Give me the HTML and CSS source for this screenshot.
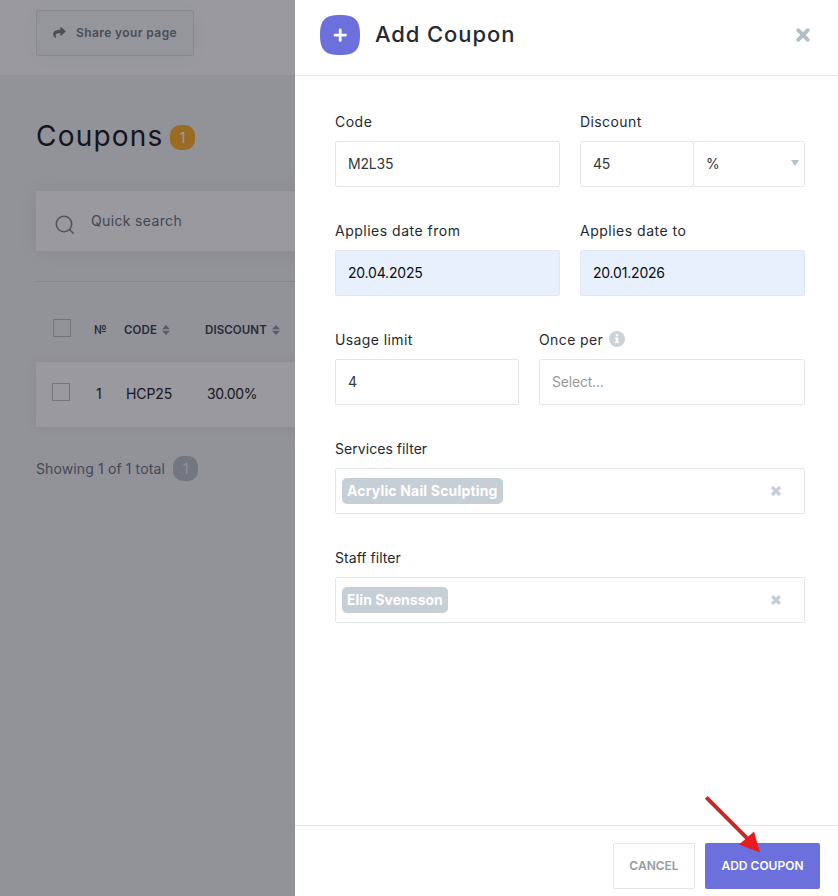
FILE: index.html
```html
<!DOCTYPE html>
<html lang="en">
<head>
    <meta charset="UTF-8">
    <meta name="viewport" content="width=device-width, initial-scale=1.0">
    <title>Coupons</title>
    <link rel="stylesheet" href="styles.css">
</head>
<body>
    <div class="page">
        <div class="topbar">
            <button class="share">
                <svg width="13" height="11" viewBox="0 0 512 448"><path fill="currentColor" d="M503 162 327 10c-15-13-39-2-39 18v80C127 110 0 142 0 293c0 61 39 121 83 153 13 10 33-3 28-19-45-145 22-184 177-186v88c0 20 24 31 39 18l176-152c12-9 12-24 0-33z"/></svg>
                <span>Share your page</span>
            </button>
        </div>
        <div class="content">
            <h1 class="title"><span class="title_text">Coupons</span><span class="badge badge_orange">1</span></h1>
            <div class="search">
                <svg width="20" height="20" viewBox="0 0 20 20" fill="none" stroke="currentColor" stroke-width="1.6"><circle cx="9" cy="9" r="7.7"/><path d="M14.5 14.5 18.6 18.6"/></svg>
                <span class="search_text">Quick search</span>
            </div>
            <div class="table">
                <div class="row row_head">
                    <span class="check"></span>
                    <span class="col_n">№</span>
                    <span class="col_code">CODE <svg class="sort" width="8" height="10" viewBox="0 0 8 10"><path fill="currentColor" d="M4 0 8 4.3H0zM4 10 0 5.7h8z"/></svg></span>
                    <span class="col_disc">DISCOUNT <svg class="sort" width="8" height="10" viewBox="0 0 8 10"><path fill="currentColor" d="M4 0 8 4.3H0zM4 10 0 5.7h8z"/></svg></span>
                </div>
                <div class="row row_item">
                    <span class="check"></span>
                    <span class="col_n">1</span>
                    <span class="col_code">HCP25</span>
                    <span class="col_disc">30.00%</span>
                </div>
            </div>
            <div class="total"><span class="total_text">Showing 1 of 1 total</span><span class="badge badge_grey">1</span></div>
        </div>
    </div>

    <div class="overlay"></div>

    <div class="modal">
        <div class="modal_header">
            <svg class="plus" width="40" height="40" viewBox="0 0 40 40">
                <path fill="#6c70dc" d="M20 0C35 0 40 5 40 20S35 40 20 40 0 35 0 20 5 0 20 0z"/>
                <path fill="none" stroke="#fff" stroke-width="2.8" stroke-linecap="round" d="M20.2 15v10.4M15 20.2h10.4"/>
            </svg>
            <h2 class="modal_title">Add Coupon</h2>
            <svg class="close" width="16" height="16" viewBox="0 0 16 16"><path fill="none" stroke="#afbfc5" stroke-width="3.8" stroke-linecap="round" d="M3.2 3.2l9.6 9.6M12.8 3.2 3.2 12.8"/></svg>
        </div>

        <div class="modal_body">
            <div class="fields">
                <div class="field">
                    <label class="wide">Code</label>
                    <div class="input">M2L35</div>
                </div>
                <div class="field">
                    <label>Discount</label>
                    <div class="group">
                        <div class="input">45</div>
                        <div class="input select"><span>%</span><svg width="8" height="6" viewBox="0 0 8 6"><path fill="#b4c1c6" d="M0 0h8L4 6z"/></svg></div>
                    </div>
                </div>
            </div>
            <div class="fields">
                <div class="field">
                    <label class="wide">Applies date from</label>
                    <div class="input filled">20.04.2025</div>
                </div>
                <div class="field">
                    <label class="wide">Applies date to</label>
                    <div class="input filled">20.01.2026</div>
                </div>
            </div>
            <div class="fields fields_limit">
                <div class="field">
                    <label>Usage limit</label>
                    <div class="input">4</div>
                </div>
                <div class="field">
                    <label>Once per
                        <svg class="info" width="16" height="16" viewBox="0 0 16 16"><circle cx="8" cy="8" r="8" fill="#cbd3da"/><path fill="#fff" d="M6.8 3.3h2.4v2H6.8zM6 6.5h3.2v4.2h.9V12H5.9v-1.3h.9V7.8H6z"/></svg>
                    </label>
                    <div class="input placeholder">Select...</div>
                </div>
            </div>
            <div class="field">
                <label class="narrow">Services filter</label>
                <div class="input tags">
                    <span class="tag tag_service">Acrylic Nail Sculpting</span>
                    <svg width="10" height="10" viewBox="0 0 10 10"><path fill="none" stroke="#c5cfd6" stroke-width="3.2" d="M1 1l8 8M9 1 1 9"/></svg>
                </div>
            </div>
            <div class="field">
                <label class="narrow">Staff filter</label>
                <div class="input tags">
                    <span class="tag tag_staff">Elin Svensson</span>
                    <svg width="10" height="10" viewBox="0 0 10 10"><path fill="none" stroke="#c5cfd6" stroke-width="3.2" d="M1 1l8 8M9 1 1 9"/></svg>
                </div>
            </div>
        </div>

        <div class="modal_footer">
            <button class="btn btn_cancel">CANCEL</button>
            <button class="btn btn_add">ADD COUPON</button>
        </div>
    </div>

    <svg class="pointer" width="60" height="60" viewBox="0 0 60 60">
        <path stroke="#c62828" stroke-width="4" d="M3.3 3.3l41 41"/>
        <path fill="#e81c1e" d="M57 58.5 36 50.5 51 37.5z"/>
    </svg>
</body>
</html>
```
FILE: styles.css
```css
* {
    box-sizing: border-box;
}

body {
    margin: 0;
    height: 896px;
    position: relative;
    display: flex;
    overflow: hidden;
    font-family: Inter, "Open Sans", sans-serif;
    font-size: 14px;
    color: #252a31;
    background: #fff;
}

svg {
    flex: none;
    display: block;
}

button {
    font-family: inherit;
}

/* coupons list */
.page {
    width: 295px;
    height: 896px;
    overflow: hidden;
    background: #f2f4f8;
}

.topbar {
    height: 75px;
    padding: 10px 36px;
    background: #fff;
}

.share {
    width: 158px;
    height: 46px;
    padding: 0 16px 2px;
    display: flex;
    align-items: center;
    gap: 10px;
    border: 1px solid #dfe6ec;
    border-radius: 2px;
    background: #f7fafd;
    box-shadow: 0 2px 20px rgba(0, 0, 0, 0.03);
    color: #78828c;
    font-size: 12px;
    font-weight: 600;
    letter-spacing: 0.4px;
    white-space: nowrap;
}

.content {
    padding: 42px 0 0 36px;
}

.title {
    display: flex;
    align-items: center;
    gap: 8px;
    height: 37px;
    margin: 0;
    font-size: 28px;
    font-weight: 400;
    color: #1b2530;
}

.title_text {
    width: 126px;
    letter-spacing: 1.2px;
}

.badge {
    width: 25px;
    height: 25px;
    display: flex;
    align-items: center;
    justify-content: center;
    border-radius: 10px;
    font-size: 14px;
}

.badge_orange {
    margin-top: 4px;
    background: #ffb534;
    color: #fff;
}

.badge_grey {
    background: #bcc6d0;
    color: #f2f4f8;
}

.search {
    display: flex;
    gap: 16px;
    width: 400px;
    height: 60px;
    margin-top: 37px;
    padding: 24px 0 0 19px;
    background: #fff;
    box-shadow: 0 0 20px rgba(0, 0, 0, 0.07);
    color: #84909a;
}

.search_text {
    margin-top: -3px;
    color: #6d7887;
    line-height: 18px;
    letter-spacing: 0.35px;
}

.table {
    width: 400px;
    margin-top: 30px;
    border-top: 1px solid #dae0f0;
}

.row {
    display: flex;
    align-items: center;
}

.row_head {
    height: 80px;
    padding: 15px 0 0 17px;
    font-size: 11.5px;
    font-weight: 600;
    letter-spacing: 0.1px;
    color: #3c4755;
}

.row_item {
    height: 65px;
    padding: 0 0 2px 16px;
    background: #fff;
    box-shadow: 0 0 12px rgba(0, 0, 0, 0.06);
}

.check {
    width: 18px;
    height: 18px;
    flex: none;
    border: 1px solid #bac3cc;
}

.row_item .check {
    margin-top: -3px;
}

.row_head .check {
    margin-top: -3px;
}

.col_n {
    width: 30px;
    margin-left: 23px;
}

.row_item .col_n {
    margin-left: 26px;
}

.col_code,
.col_disc {
    display: flex;
    align-items: center;
    gap: 5px;
    width: 81px;
}

.row_item .col_code,
.row_item .col_disc {
    letter-spacing: -0.35px;
}

.row_item .col_code {
    letter-spacing: -0.1px;
}

.sort {
    color: #8f9baa;
}

.total {
    display: flex;
    align-items: center;
    height: 25px;
    margin-top: 29px;
    color: #707b88;
}

.total_text {
    width: 137px;
    padding-bottom: 1px;
    letter-spacing: 0.12px;
    white-space: nowrap;
}

.overlay {
    position: absolute;
    inset: 0 543px 0 0;
    background: rgba(2, 0, 10, 0.4);
}

/* side panel */
.modal {
    width: 543px;
    height: 896px;
    display: flex;
    flex-direction: column;
    background: #fff;
}

.modal_header {
    display: flex;
    align-items: center;
    height: 76px;
    padding: 0 27px 6px 25px;
    border-bottom: 1px solid #e3e7ea;
}

.modal_title {
    flex: 1;
    margin: -2px 0 0 15px;
    font-size: 22px;
    font-weight: 500;
    letter-spacing: 0.9px;
}

.modal_body {
    flex: 1;
    padding: 35px 33px 0 40px;
}

.fields {
    display: grid;
    grid-template-columns: 225px 225px;
    gap: 20px;
}

.fields_limit {
    grid-template-columns: 184px 266px;
}

.field {
    margin-bottom: 33px;
}

label {
    display: flex;
    align-items: center;
    gap: 6px;
    height: 21px;
    margin-bottom: 9px;
    letter-spacing: 0.4px;
}

label.wide {
    letter-spacing: 0.5px;
}

label.narrow {
    letter-spacing: 0.05px;
}

.input {
    display: flex;
    align-items: center;
    height: 46px;
    padding: 0 12px 2px;
    border: 1px solid #e2e7eb;
    border-radius: 2px;
    color: #32373d;
    letter-spacing: -0.2px;
}

.filled {
    background: #e8f0fe;
    color: #0b0d10;
}

.placeholder {
    color: #999;
}

.group {
    display: grid;
    grid-template-columns: 114px 111px;
}

.select {
    justify-content: space-between;
    width: 112px;
    margin-left: -1px;
    padding-right: 5px;
}

.info {
    margin-top: -2px;
}

.tags {
    justify-content: space-between;
    padding: 0 23px 0 6px;
}

.tag {
    height: 26px;
    padding: 0 5px;
    border-radius: 5px;
    background: #c6ced6;
    color: #fff;
    font-weight: 700;
    line-height: 26px;
    white-space: nowrap;
}

.tag_service {
    width: 161px;
    letter-spacing: 0.17px;
}

.tag_staff {
    width: 106px;
    letter-spacing: 0.03px;
}

.modal_footer {
    display: flex;
    justify-content: flex-end;
    gap: 10px;
    height: 71px;
    padding: 17px 18px 0 0;
    border-top: 1px solid #e1e6ee;
}

.btn {
    height: 46px;
    padding: 0 0 2px;
    border-radius: 2px;
    font-size: 12px;
    font-weight: 600;
}

.btn_cancel {
    width: 82px;
    border: 1px solid #e2e7eb;
    background: #fff;
    color: #929da3;
}

.btn_add {
    width: 115px;
    border: 0;
    background: #6c70dc;
    color: #fff;
}

/* arrow over the submit button */
.pointer {
    position: absolute;
    left: 703px;
    top: 794px;
}
```
